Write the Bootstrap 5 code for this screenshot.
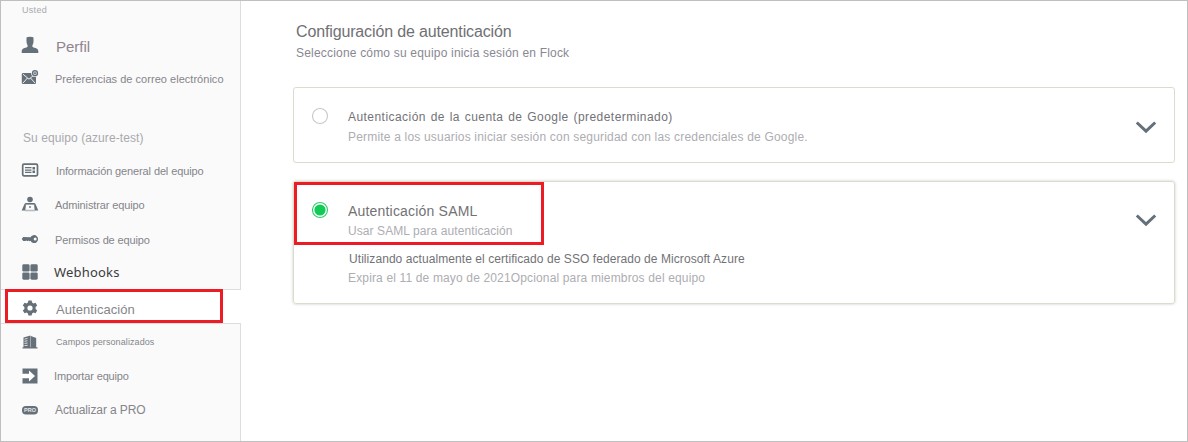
<!DOCTYPE html>
<html lang="es">
<head>
<meta charset="utf-8">
<meta name="viewport" content="width=device-width, initial-scale=1">
<title>Configuración de autenticación</title>
<link href="https://cdn.jsdelivr.net/npm/bootstrap@5.3.0/dist/css/bootstrap.min.css" rel="stylesheet">
<style>
body{font-family:"Liberation Sans",Arial,sans-serif;background:#fff;overflow:hidden}
.app-frame{height:442px;border:1px solid #bfbfbf}
.side-pane{width:240px}
.side-block{background:#fafafa;border-right:1px solid #ddd}
.side-label{padding-left:21px;color:#a9a9ae}
.side-item{padding-left:20px;color:#85858a;font-size:11px}
.side-item svg{width:18px;height:18px;flex:none;fill:#657079;margin-right:1px}
.side-item span,.side-label span{white-space:nowrap}
.side-active{height:35px;padding-top:6px;border-top:1px solid #ddd;border-bottom:1px solid #ddd;background:#fff}
.main-pane{padding:20px 12px 0 52px}
.page-title{font-size:16px;line-height:22px;letter-spacing:-.14px;color:#707074;padding-left:3px}
.page-sub{font-size:12px;line-height:20px;letter-spacing:.19px;color:#888892;padding-left:3px}
.auth-card{border:1px solid #dcdccd;border-radius:3px;padding:0 17px 0 18px}
.auth-card.chosen{box-shadow:0 0 3px rgba(0,0,0,.22)}
.auth-radio{width:18px;height:18px;flex:none;margin-right:19px}
.chev{width:22px;height:14px;flex:none;fill:none;stroke:#657079;stroke-width:3}
.opt-title{color:#727276;white-space:nowrap}
.opt-note{font-size:12px;line-height:20px;color:#adadb2;white-space:nowrap}
.mark-box{border:3px solid #ed1c24;z-index:3;pointer-events:none}
.mark-nav{left:5px;top:289px;width:218px;height:34px}
.mark-saml{left:294px;top:182px;width:250px;height:63px}
</style>
</head>
<body>
<div class="app-frame d-flex position-relative">
  <nav class="side-pane d-flex flex-column flex-shrink-0">
    <div class="side-block" style="height:288px">
      <div class="side-label d-flex align-items-center" style="height:18px;padding-top:2px;font-size:9px;letter-spacing:.3px"><span>Usted</span></div>
      <div class="side-item d-flex align-items-center" style="height:36px;margin-top:10px;font-size:15px">
        <svg viewBox="0 0 18 18" style="margin-top:-5px"><path d="M5.500 1.600Q6.300.7 9 .7t3.500.9v4.300Q12.200 8 11.400 9.200v1.200Q11.500 11.200 13.500 11.800 17.300 12.800 17.300 15.200V17H.7v-1.800Q.7 12.800 4.500 11.800 6.500 11.200 6.600 10.400V9.200Q5.800 8 5.500 5.900Z"/></svg>
        <span style="padding-left:16px;color:#91848f">Perfil</span>
      </div>
      <div class="side-item d-flex align-items-center" style="height:28px;letter-spacing:.03px">
        <svg viewBox="0 0 18 18" style="margin-top:-5px"><rect x=".8" y="5" width="14.200" height="11" rx="1.200"/><path d="M2 6.200l6 5 6-5M2 15l4.500-5M14 15l-4.500-5" fill="none" stroke="#fafafa" stroke-width=".9" style="fill:none"/><circle cx="14" cy="5.200" r="3.800" fill="#fafafa" style="fill:#fafafa"/><circle cx="14" cy="5.200" r="2.500" stroke="#657079" stroke-width="1.300" style="fill:#c8cdd0"/><circle cx="14" cy="5.200" r=".9"/></svg>
        <span style="padding-left:15px">Preferencias de correo electrónico</span>
      </div>
      <div class="side-label d-flex align-items-center" style="height:30px;margin-top:30px;font-size:12px;letter-spacing:.08px"><span style="padding-left:1px">Su equipo (azure-test)</span></div>
      <div class="side-item d-flex align-items-center" style="height:35px;letter-spacing:-.12px">
        <svg viewBox="0 0 18 18" style="margin-top:-1px"><rect x="1.700" y="3.200" width="14.800" height="11.600" rx="1.300" stroke="#657079" stroke-width="1.700" style="fill:none"/><path d="M4 6h6.500v1.300H4zM4 8.400h6.500v1.300H4zM4 10.800h6.500v1.200H4zM11.500 6H14v2.500h-2.500zM11.500 9.500H14V12h-2.500z"/></svg>
        <span style="padding-left:16px;padding-top:1px">Información general del equipo</span>
      </div>
      <div class="side-item d-flex align-items-center" style="height:34px;letter-spacing:-.12px">
        <svg viewBox="0 0 18 18" style="margin-top:-2px"><circle cx="9" cy="4.500" r="2.800"/><path d="M5 8h8q1 0 1.500 1L17.300 15.500H.7L3.500 9Q4 8 5 8Z"/><path d="M4.700 9.300h8.600l.7 6H4z" stroke="#657079" stroke-width=".6" style="fill:#fafafa"/><circle cx="9" cy="12" r=".9"/><path d="M4 15h10v1.300H4z" style="fill:#b9bdc1"/></svg>
        <span style="padding-left:15px">Administrar equipo</span>
      </div>
      <div class="side-item d-flex align-items-center" style="height:35px;letter-spacing:-.14px">
        <svg viewBox="0 0 18 18" style="margin-top:-1px"><path d="M9.500 7.300A4 4 0 1 1 9.500 10.800L8.500 11.200l-1-.8-1 .9-1.100-.8-1 .6H2.300L.7 9l1.500-1.900Z"/><circle cx="14.200" cy="9" r="1.500" style="fill:#fafafa"/></svg>
        <span style="padding-left:15px;padding-top:1px">Permisos de equipo</span>
      </div>
      <div class="side-item d-flex align-items-center" style="height:30px">
        <svg viewBox="0 0 18 18"><rect x="1.300" y="1.300" width="7.300" height="7.300" rx="1.400"/><rect x="9.400" y="1.300" width="7.300" height="7.300" rx="1.400"/><rect x="1.300" y="9.400" width="7.300" height="7.300" rx="1.400"/><rect x="9.400" y="9.400" width="7.300" height="7.300" rx="1.400"/></svg>
        <span style="padding-left:14px;color:#3c3c40;font:13px 'Noto Sans',sans-serif;letter-spacing:.2px">Webhooks</span>
      </div>
    </div>
    <div class="side-item side-active d-flex align-items-center" style="letter-spacing:.06px;font-size:13px">
      <svg viewBox="0 0 18 18" style="margin-top:-4px"><path fill-rule="evenodd" d="M7.400 1.500h3.200l.5 2.100 1.300.8 2.100-.7 1.700 2.700-1.600 1.600v2l1.600 1.600-1.700 2.700-2.100-.7-1.300.8-.5 2.100H7.400l-.5-2.100-1.300-.8-2.100.7-1.700-2.700L3.400 10V8L1.800 6.400l1.700-2.700 2.100.7 1.300-.8ZM9 6.400a2.600 2.600 0 1 0 0 5.200 2.600 2.600 0 0 0 0-5.200Z"/></svg>
      <span style="padding-left:16px;padding-top:1px">Autenticación</span>
    </div>
    <div class="side-block flex-grow-1">
      <div class="side-item d-flex align-items-center" style="height:35px;font-size:9px;letter-spacing:.09px">
        <svg viewBox="0 0 18 18"><path d="M2.500 4.500L9.500 2.500V15H2.500ZM9.900 3l5.300 2V15H9.900ZM1.500 14.300h15V15.500h-15z"/><path d="M3.500 6.200l3-.8M3.500 8.300L6.500 7.700M3.500 10.400L6.500 10M3.500 12.600L6.500 12.300" stroke="#fafafa" stroke-width=".8"/></svg>
        <span style="padding-left:16px;padding-top:2px">Campos personalizados</span>
      </div>
      <div class="side-item d-flex align-items-center" style="height:34px;letter-spacing:-.15px">
        <svg viewBox="0 0 18 18"><path d="M1.500 1.500h15v15h-15z"/><path d="M1 6.700h7V3.500L14 9l-6 5.500v-3.200H1Z" style="fill:#fff"/></svg>
        <span style="padding-left:14px">Importar equipo</span>
      </div>
      <div class="side-item d-flex align-items-center" style="height:33px;font-size:12px;letter-spacing:-.09px">
        <svg viewBox="0 0 18 18"><rect x="1" y="5" width="16" height="8.400" rx="4"/><text x="9" y="11.100" text-anchor="middle" font-size="5.500" font-weight="700" letter-spacing="0" style="fill:#e6e8ea">PRO</text></svg>
        <span style="padding-left:15px">Actualizar a PRO</span>
      </div>
    </div>
  </nav>

  <main class="main-pane flex-grow-1">
    <h1 class="page-title fw-normal m-0">Configuración de autenticación</h1>
    <p class="page-sub m-0">Seleccione cómo su equipo inicia sesión en Flock</p>

    <section class="auth-card d-flex" style="height:76px;margin-top:24px">
      <svg class="auth-radio" viewBox="0 0 18 18" style="margin-top:19px"><circle cx="8" cy="9" r="7.500" fill="#fff" stroke="#c9c9cc" stroke-width="1.100"/></svg>
      <div class="flex-grow-1" style="padding-top:19px;margin-left:-1px">
        <div class="opt-title" style="font-size:12px;line-height:20px;letter-spacing:.45px;word-spacing:1px">Autenticación de la cuenta de Google (predeterminado)</div>
        <div class="opt-note" style="letter-spacing:.187px">Permite a los usuarios iniciar sesión con seguridad con las credenciales de Google.</div>
      </div>
      <svg class="chev" viewBox="0 0 22 14" style="margin-top:32px"><path d="M1.800 2.500L11 11.200l9.200-8.700"/></svg>
    </section>

    <section class="auth-card chosen d-flex" style="height:123px;margin-top:18px">
      <svg class="auth-radio" viewBox="0 0 18 18" style="margin-top:19px"><circle cx="8" cy="9" r="7.500" fill="#fff" stroke="#2fcf6b" stroke-width="1.100"/><circle cx="8" cy="9" r="5.600" fill="#12ca58"/></svg>
      <div class="flex-grow-1" style="padding-top:18px;margin-left:-1px">
        <div class="opt-title" style="font-size:14px;line-height:22px;letter-spacing:.19px">Autenticación SAML</div>
        <div class="opt-note" style="letter-spacing:.08px;line-height:18px">Usar SAML para autenticación</div>
        <div class="opt-title" style="font-size:12px;line-height:20px;letter-spacing:.067px;margin-top:9px;padding-left:1px">Utilizando actualmente el certificado de SSO federado de Microsoft Azure</div>
        <div class="opt-note" style="letter-spacing:.15px;line-height:18px">Expira el 11 de mayo de 2021Opcional para miembros del equipo</div>
      </div>
      <svg class="chev" viewBox="0 0 22 14" style="margin-top:31px"><path d="M1.800 2.500L11 11.200l9.200-8.700"/></svg>
    </section>
  </main>
</div>
<div class="mark-box mark-nav position-absolute"></div>
<div class="mark-box mark-saml position-absolute"></div>
<script src="https://cdn.jsdelivr.net/npm/bootstrap@5.3.0/dist/js/bootstrap.bundle.min.js"></script>
</body>
</html>
